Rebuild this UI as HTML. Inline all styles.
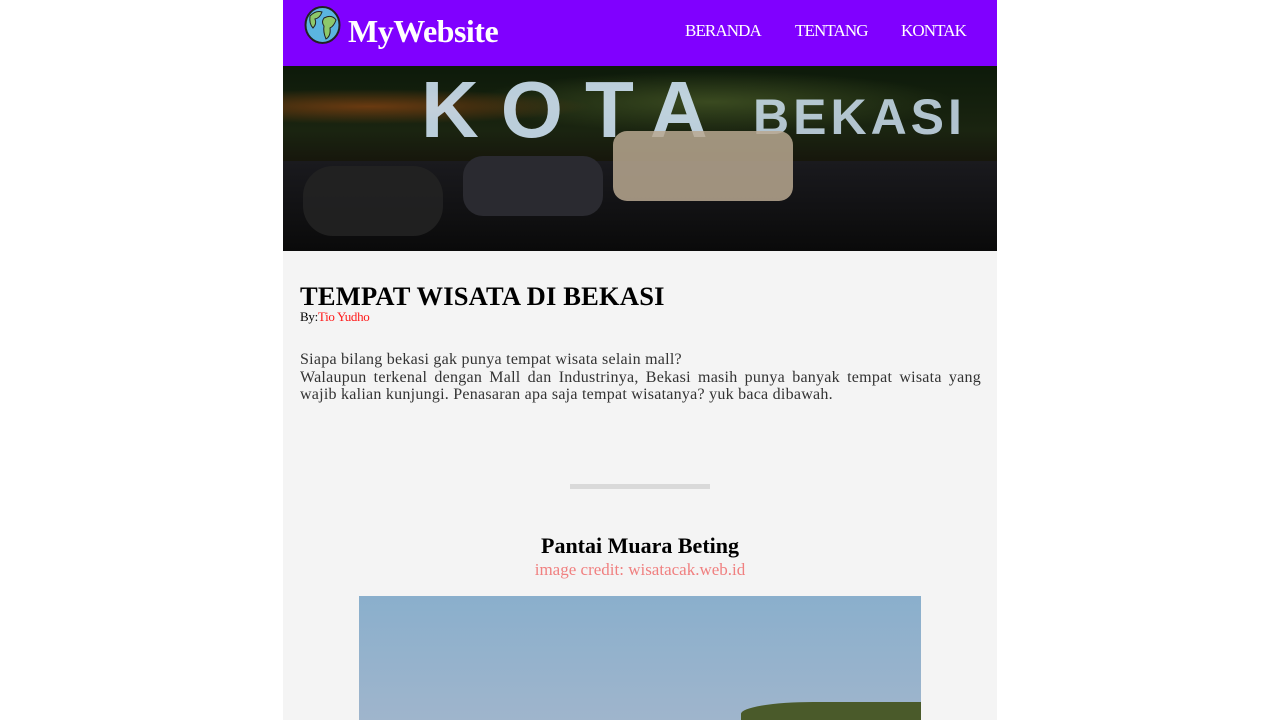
<!DOCTYPE html>
<html><head><meta charset="utf-8"><style>
*{margin:0;padding:0;box-sizing:border-box}
body{width:1280px;height:720px;background:#fff;font-family:"Liberation Serif",serif;overflow:hidden}
.wrap{position:absolute;left:283px;top:0;width:714px;height:720px;background:#f4f4f4}
.hdr{position:absolute;left:0;top:0;width:714px;height:66px;background:#8000ff}
.logo{position:absolute;left:65px;top:13px;color:#fff;font-weight:bold;font-size:32px;letter-spacing:-0.5px}
.nav{position:absolute;top:21px;color:#fff;font-size:17px;letter-spacing:-0.9px}
.hero{position:absolute;left:0;top:66px;width:714px;height:185px;overflow:hidden;
background:linear-gradient(180deg,#0d1a0a 0%,#1a2410 35%,#15100a 60%,#060606 100%)}
.t{position:absolute;color:#000}
</style></head><body>
<div class="wrap">
<div class="hdr">
<svg style="position:absolute;left:21px;top:6px" width="37" height="38" viewBox="0 0 37 38"><ellipse cx="18.5" cy="19" rx="17" ry="18" fill="#5bb5e0" stroke="#222" stroke-width="2"/><path d="M6 10 Q12 4 18 6 Q16 12 11 13 Q13 18 9 22 Q5 18 6 10Z M20 12 Q28 8 32 14 Q30 20 26 22 Q27 30 22 33 Q19 26 20 20 Q17 16 20 12Z" fill="#8dc86a" stroke="#222" stroke-width="1"/></svg>
<div class="logo">MyWebsite</div>
<div class="nav" style="left:402px">BERANDA</div>
<div class="nav" style="left:512px">TENTANG</div>
<div class="nav" style="left:618px">KONTAK</div>
</div>
<div class="hero">
<div style="position:absolute;left:0;top:0;width:714px;height:90px;background:radial-gradient(ellipse at 12% 45%,#6a3a10 0%,transparent 25%),radial-gradient(ellipse at 60% 40%,#3a4a20 0%,transparent 40%)"></div>
<div style="position:absolute;left:138px;top:-2px;font:bold 80px 'Liberation Sans',sans-serif;color:#d8ecff;letter-spacing:22px;opacity:.85">KOTA</div>
<div style="position:absolute;left:470px;top:22px;font:bold 50px 'Liberation Sans',sans-serif;color:#d8ecff;letter-spacing:4px;opacity:.8">BEKASI</div>
<div style="position:absolute;left:0;top:95px;width:714px;height:90px;background:linear-gradient(180deg,#1a1a1e,#0a0a0a)"></div>
<div style="position:absolute;left:330px;top:65px;width:180px;height:70px;background:#b8a890;border-radius:14px;opacity:.85"></div>
<div style="position:absolute;left:20px;top:100px;width:140px;height:70px;background:#222;border-radius:30px;opacity:.9"></div>
<div style="position:absolute;left:180px;top:90px;width:140px;height:60px;background:#2a2a30;border-radius:20px"></div>
</div>
<div class="t" style="left:17px;top:281px;font-size:26.5px;font-weight:bold;letter-spacing:0.2px">TEMPAT WISATA DI BEKASI</div>
<div class="t" style="left:17px;top:309px;font-size:13px;letter-spacing:-0.3px">By:<span style="color:#ff1a1a">Tio Yudho</span></div>
<div class="t" style="left:17px;top:351px;width:681px;font-size:16px;line-height:17.5px;color:#333;text-align:justify;letter-spacing:0.25px">Siapa bilang bekasi gak punya tempat wisata selain mall?<br>Walaupun terkenal dengan Mall dan Industrinya, Bekasi masih punya banyak tempat wisata yang wajib kalian kunjungi. Penasaran apa saja tempat wisatanya? yuk baca dibawah.</div>
<div style="position:absolute;left:287px;top:484px;width:140px;height:5px;background:#d9d9d9"></div>
<div class="t" style="left:0;width:714px;top:533px;text-align:center;font-size:22px;font-weight:bold">Pantai Muara Beting</div>
<div class="t" style="left:0;width:714px;top:560px;text-align:center;font-size:17px;color:#f08080">image credit: wisatacak.web.id</div>
<div style="position:absolute;left:76px;top:596px;width:562px;height:124px;background:linear-gradient(180deg,#8aafcc,#9fb5cc);overflow:hidden">
<div style="position:absolute;right:0;top:106px;width:180px;height:30px;background:#4a5a2a;border-radius:40% 0 0 0"></div></div>
</div>
</body></html>
